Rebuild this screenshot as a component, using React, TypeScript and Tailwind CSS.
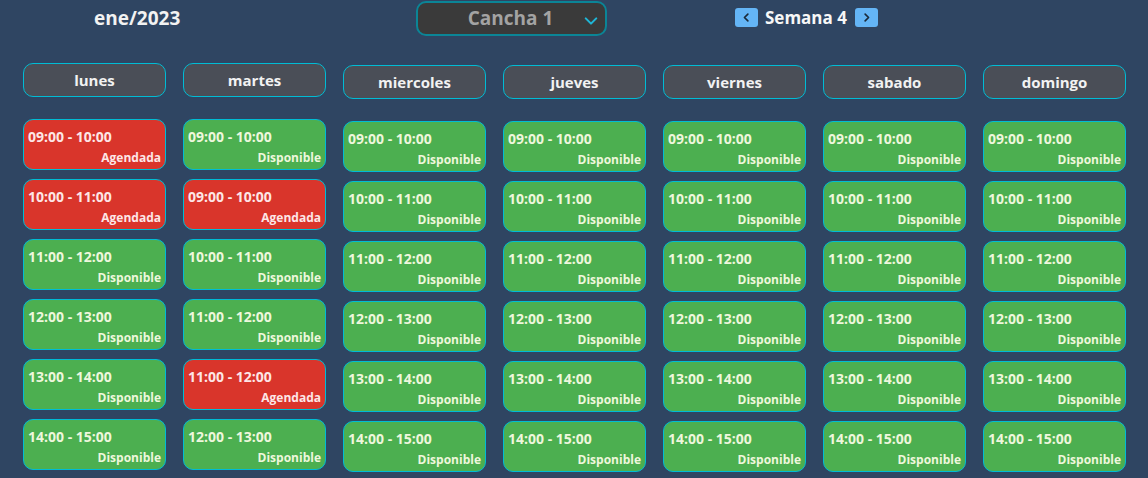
import React from "react";

type Slot = { t: string; busy?: boolean };

const days: { name: string; slots: Slot[]; offset?: boolean }[] = [
  {
    name: "lunes",
    slots: [
      { t: "09:00 - 10:00", busy: true },
      { t: "10:00 - 11:00", busy: true },
      { t: "11:00 - 12:00" },
      { t: "12:00 - 13:00" },
      { t: "13:00 - 14:00" },
      { t: "14:00 - 15:00" },
    ],
  },
  {
    name: "martes",
    slots: [
      { t: "09:00 - 10:00" },
      { t: "09:00 - 10:00", busy: true },
      { t: "10:00 - 11:00" },
      { t: "11:00 - 12:00" },
      { t: "11:00 - 12:00", busy: true },
      { t: "12:00 - 13:00" },
    ],
  },
  ...["miercoles", "jueves", "viernes", "sabado", "domingo"].map((n) => ({
    name: n,
    offset: true,
    slots: [
      { t: "09:00 - 10:00" },
      { t: "10:00 - 11:00" },
      { t: "11:00 - 12:00" },
      { t: "12:00 - 13:00" },
      { t: "13:00 - 14:00" },
      { t: "14:00 - 15:00" },
    ],
  })),
];

function Chevron({ dir, className }: { dir: "left" | "right" | "down"; className?: string }) {
  const d =
    dir === "left" ? "M10 3 L5 8 L10 13" : dir === "right" ? "M6 3 L11 8 L6 13" : "M2 5 L8 11 L14 5";
  return (
    <svg viewBox="0 0 16 16" className={className} fill="none" stroke="currentColor" strokeWidth={2.4} strokeLinecap="round" strokeLinejoin="round">
      <path d={d} />
    </svg>
  );
}

export default function App() {
  return (
    <div
      className="w-[1148px] h-[478px] overflow-hidden bg-[#2f4562] text-white"
      style={{ fontFamily: '"Open Sans", "Noto Sans", sans-serif' }}
    >
      <div className="flex items-start h-[38px]">
        <div className="w-[416px] shrink-0 pl-[94px] pt-[5px] text-[19px] font-bold leading-[27px] text-[#f2f2f2]">ene/2023</div>
        <div className="mt-[1px] w-[191px] shrink-0 h-[35px] rounded-[10px] border-2 border-[#0b8596] bg-[#3a3a3a] flex items-center relative">
          <span className="flex-1 text-center text-[19px] font-bold text-[#a3a3a3] pr-[2px]">Cancha 1</span>
          <Chevron dir="down" className="absolute right-[7px] top-[11px] w-[14px] h-[14px] text-[#1fb6d6]" />
        </div>
        <div className="ml-[128px] mt-[8px] flex items-center">
          <div className="w-[23px] h-[19px] rounded-[3px] bg-[#64b5f6] flex items-center justify-center text-[#1a2a3a]">
            <Chevron dir="left" className="w-[11px] h-[11px]" />
          </div>
          <span className="ml-[7px] mr-[8px] text-[17px] font-bold leading-[19px] text-[#f7f7f7]">Semana 4</span>
          <div className="w-[23px] h-[19px] rounded-[3px] bg-[#64b5f6] flex items-center justify-center text-[#1a2a3a]">
            <Chevron dir="right" className="w-[11px] h-[11px]" />
          </div>
        </div>
      </div>

      <div className="flex gap-[17px] pl-[23px] mt-[25px]">
        {days.map((d) => (
          <div key={d.name} className={"w-[143px] flex flex-col " + (d.offset ? "mt-[2px]" : "")}>
            <div className="h-[34px] rounded-[10px] border border-[#00bcd4] bg-[#4a4e57] flex items-center justify-center text-[15px] font-bold text-[#f2f2f2]">
              {d.name}
            </div>
            <div className="mt-[22px] flex flex-col gap-[9px]">
              {d.slots.map((s, i) => (
                <div
                  key={i}
                  className={
                    "h-[51px] rounded-[10px] border border-[#00bcd4] flex flex-col pl-[4px] pr-[4px] pt-[7px] " +
                    (s.busy ? "bg-[#d9352b] text-[#fde6e6]" : "bg-[#4caf50] text-[#eef7dc]")
                  }
                >
                  <div className="text-[14px] font-bold leading-[20px]">{s.t}</div>
                  <div className="mt-[2px] text-[12px] font-bold leading-[17px] text-right">
                    {s.busy ? "Agendada" : "Disponible"}
                  </div>
                </div>
              ))}
            </div>
          </div>
        ))}
      </div>
    </div>
  );
}
